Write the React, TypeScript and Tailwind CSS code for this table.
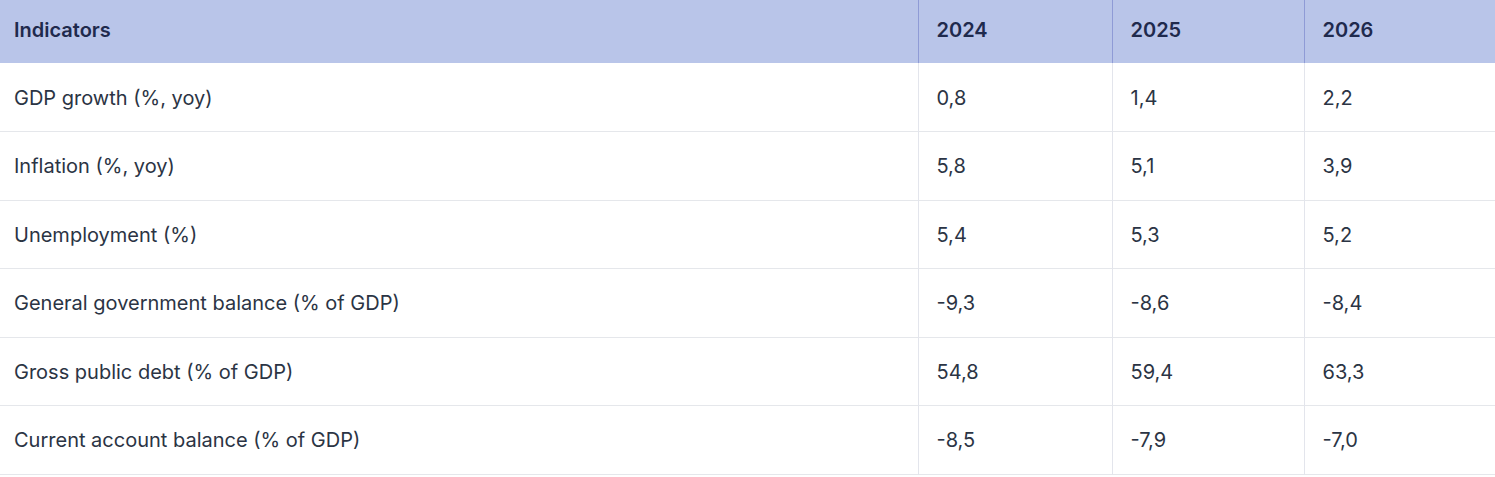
import React from 'react';

const rows = [
  { label: "GDP growth (%, yoy)", values: ["0,8", "1,4", "2,2"] },
  { label: "Inflation (%, yoy)", values: ["5,8", "5,1", "3,9"] },
  { label: "Unemployment (%)", values: ["5,4", "5,3", "5,2"] },
  { label: "General government balance (% of GDP)", values: ["-9,3", "-8,6", "-8,4"] },
  { label: "Gross public debt (% of GDP)", values: ["54,8", "59,4", "63,3"] },
  { label: "Current account balance (% of GDP)", values: ["-8,5", "-7,9", "-7,0"] },
];

const years = ["2024", "2025", "2026"];

export default function App() {
  return (
    <div className="w-[1495px] bg-white font-['Inter',sans-serif]">
      <table className="w-full table-fixed border-collapse">
        <colgroup>
          <col className="w-[918px]" />
          <col className="w-[194px]" />
          <col className="w-[192px]" />
          <col />
        </colgroup>
        <thead>
          <tr className="h-[63px] bg-[#b9c5e9]">
            <th className="pl-[14px] pb-[3px] text-left text-[20px] font-semibold text-[#1f2a4d]">Indicators</th>
            {years.map((y) => (
              <th
                key={y}
                className="border-l border-[#8f9bd6] pl-[18px] pb-[3px] text-left text-[20px] font-semibold text-[#1f2a4d]"
              >
                {y}
              </th>
            ))}
          </tr>
        </thead>
        <tbody>
          {rows.map((row) => (
            <tr key={row.label} className="h-[68.5px] border-b border-[#e5e7eb]">
              <td className="pl-[14px] pt-[1px] text-[20px] text-[#2b3444]">{row.label}</td>
              {row.values.map((v, i) => (
                <td key={i} className="border-l border-[#e3e5ec] pl-[18px] pt-[1px] text-[20px] text-[#2b3444]">
                  {v}
                </td>
              ))}
            </tr>
          ))}
        </tbody>
      </table>
    </div>
  );
}
